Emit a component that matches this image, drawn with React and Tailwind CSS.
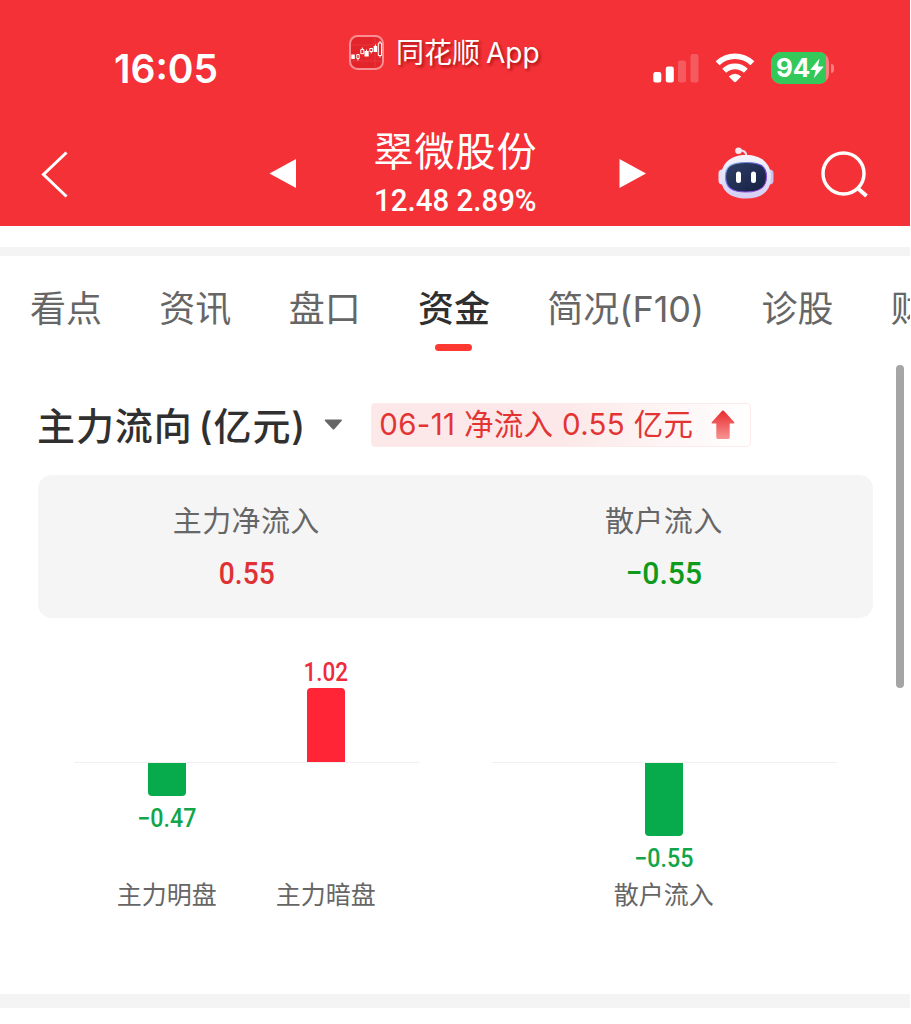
import React, { useState } from 'react';

const TABS = ['看点', '资讯', '盘口', '资金', '简况(F10)', '诊股', '财务'];

const SUMMARY = [
  { label: '主力净流入', value: '0.55', color: 'text-[#e03234]', scale: 'scale-x-[0.88]' },
  { label: '散户流入', value: '−0.55', color: 'text-[#109a1c]', scale: 'scale-x-[0.94]' },
];

const CHARTS = [
  [
    { label: '主力明盘', value: '−0.47', height: 33, up: false },
    { label: '主力暗盘', value: '1.02', height: 74, up: true },
  ],
  [{ label: '散户流入', value: '−0.55', height: 73, up: false }],
];

function AppLogo() {
  return (
    <svg width="35" height="35" viewBox="0 0 35 35" fill="none">
      <rect x="1" y="1" width="33" height="33" rx="7.5" fill="#e3242b" stroke="#f98f92" strokeWidth="2" />
      <path d="M2 10H33M2 26H33M26 2V33" stroke="#ee4448" strokeWidth="0.6" />
      <path d="M2.300 19.500h3.500v4.500h-3.500zM15.500 16h4.200v5.500H15.500zM24.700 11h3.500v6h-3.500z" fill="#fff" />
      <path d="M7.800 19.500h2.400v4H7.800zM11.800 14.500h3v4.200h-3zM20.800 13.500h2.900v3h-2.900zM29.300 8h3.200v12.500h-3.200z" stroke="#fff" strokeWidth="1" />
      <path d="M9 23.500v2M13.300 14.500v-2M17.600 16v-1.500M22.200 16.500v2M26.500 11v-1.500M31 8V6M31 20.500v2" stroke="#fff" strokeWidth="1" />
    </svg>
  );
}

function SignalIcon() {
  return (
    <svg width="46" height="30" viewBox="0 0 46 30" fill="#fff">
      <rect x="0.300" y="19" width="8" height="10.500" rx="2.200" />
      <rect x="12.800" y="13.500" width="8" height="16" rx="2.200" />
      <rect x="25" y="7.500" width="8" height="22" rx="2.200" opacity="0.2" />
      <rect x="37.500" y="1" width="8" height="28.500" rx="2.200" opacity="0.2" />
    </svg>
  );
}

function WifiIcon() {
  return (
    <svg width="40" height="30" viewBox="0 0 40 30" fill="none" stroke="#fff" strokeWidth="5.600">
      <path d="M2.600 10.300A25 25 0 0 1 37.400 10.300" />
      <path d="M9.200 17.800A15.500 15.500 0 0 1 30.800 17.800" />
      <path d="M13.800 23.600Q20 17.800 26.200 23.600L21 28.800Q20 29.700 19 28.800Z" fill="#fff" stroke="none" />
    </svg>
  );
}

function Battery() {
  return (
    <div className="flex items-center">
      <div className="flex h-8 w-[58px] overflow-hidden rounded-[10px] bg-[#f77f80]">
        <div className="flex h-8 w-[55px] items-center bg-[#33c85a] pl-[5px]">
          <span className="text-[26px] leading-8 font-bold tracking-[-0.2px] text-white">94</span>
          <svg className="shrink-0" width="14" height="21" viewBox="0 0 14 21" fill="#fff">
            <path d="M9.500 0.500L0.600 11.400Q0.200 12 0.900 12H5.800L3.800 20.200L13.200 9.300Q13.600 8.600 12.900 8.600H7.900Z" />
          </svg>
        </div>
      </div>
      <div className="ml-[2px] h-[9px] w-[3px] rounded-r-full bg-[#f77f80]" />
    </div>
  );
}

function RobotIcon() {
  return (
    <svg width="56" height="52" viewBox="0 0 56 52" fill="none">
      <defs>
        <linearGradient id="shell" x1="0" y1="0" x2="0" y2="1">
          <stop offset="0" stopColor="#f7f6fd" />
          <stop offset="1" stopColor="#d3cdf3" />
        </linearGradient>
        <linearGradient id="rim" x1="0" y1="0" x2="1" y2="1">
          <stop offset="0" stopColor="#7fc3e8" />
          <stop offset="0.500" stopColor="#6b4fe0" />
          <stop offset="1" stopColor="#a44bd8" />
        </linearGradient>
        <linearGradient id="screen" x1="0" y1="0" x2="1" y2="1">
          <stop offset="0" stopColor="#303e66" />
          <stop offset="1" stopColor="#151f43" />
        </linearGradient>
      </defs>
      <path d="M20.500 3.500C26 3 28.500 5 28.500 10" stroke="#f0dcea" strokeWidth="2.200" />
      <circle cx="20.500" cy="3.700" r="3.300" fill="#f6e7f1" />
      <rect x="0.500" y="22.500" width="9" height="15" rx="4" fill="#e4e0f8" />
      <rect x="46.500" y="22.500" width="9" height="15" rx="4" fill="#c9c3ee" />
      <path d="M28 8C43 8 53 16 53 30C53 44 44 51.500 28 51.500S3 44 3 30C3 16 13 8 28 8Z" fill="url(#shell)" />
      <path d="M28 15.500C42 15.500 48.500 19 48.500 29.500C48.500 40.500 42 45 28 45S7.500 40.500 7.500 29.500C7.500 19 14 15.500 28 15.500Z" fill="url(#screen)" stroke="url(#rim)" strokeWidth="1.200" />
      <rect x="18" y="24.500" width="5" height="11.500" rx="2.500" fill="#fff" />
      <rect x="33" y="24.500" width="5" height="11.500" rx="2.500" fill="#fff" />
    </svg>
  );
}

function Header() {
  return (
    <header className="h-[226px] bg-[#f33136] text-white">
      <div className="flex h-[106px] items-start">
        <div className="mt-[44px] ml-[114px] w-[235px] text-[39px] leading-[50px] font-semibold">16:05</div>
        <div className="mt-[34px] flex h-9 w-[304px] items-center gap-3">
          <AppLogo />
          <span className="pt-[2px] text-[28px] leading-9 whitespace-nowrap [text-shadow:2px_2px_3px_rgba(120,0,0,0.6)]">
            同花顺<span className="ml-[6px]">App</span>
          </span>
        </div>
        <div className="mt-[52px] flex h-8 items-center">
          <SignalIcon />
          <div className="ml-[16px]"><WifiIcon /></div>
          <div className="ml-[16px]"><Battery /></div>
        </div>
      </div>
      <div className="flex h-[120px] items-start">
        <button type="button" className="mt-[45px] ml-[41px]">
          <svg width="28" height="48" viewBox="0 0 28 48" fill="none" stroke="#fff" strokeWidth="3">
            <path d="M25.500 1.500L2.500 23.500L25.500 45.500" />
          </svg>
        </button>
        <button type="button" className="mt-[52px] ml-[200px]">
          <svg width="28" height="32" viewBox="0 0 28 32" fill="#fff"><path d="M0.500 15.500L27 1V30Z" /></svg>
        </button>
        <div className="ml-[58px] flex w-[201px] flex-col items-center">
          <h1 className="mt-[20px] text-[40px] leading-[52px] tracking-[1px] whitespace-nowrap">翠微股份</h1>
          <div className="mt-[2px] scale-x-[0.92] font-['Roboto'] text-[32px] leading-10 font-medium whitespace-nowrap">12.48 2.89%</div>
        </div>
        <button type="button" className="mt-[52px] ml-[63px]">
          <svg width="28" height="32" viewBox="0 0 28 32" fill="#fff"><path d="M27 15.500L0.500 1V30Z" /></svg>
        </button>
        <button type="button" className="mt-[41px] ml-[71px]"><RobotIcon /></button>
        <button type="button" className="mt-[44px] ml-[46px]">
          <svg width="50" height="50" viewBox="0 0 50 50" fill="none" stroke="#fff" strokeWidth="3.500">
            <circle cx="23.500" cy="23.500" r="20.500" />
            <path d="M37.500 38L46.500 46" strokeWidth="4" />
          </svg>
        </button>
      </div>
    </header>
  );
}

function Tabs() {
  const [active, setActive] = useState('资金');
  return (
    <nav className="flex h-[109px] gap-[57.3px] overflow-hidden pt-[28px] pl-[30px]">
      {TABS.map((tab) => (
        <button
          key={tab}
          type="button"
          onClick={() => setActive(tab)}
          className="flex shrink-0 flex-col items-center text-[36px] leading-[50px] whitespace-nowrap text-[#666]"
        >
          <span className={tab === active ? 'font-medium text-[#2f2f2f]' : ''}>{tab}</span>
          {tab === active && <span className="mt-[10px] h-[7px] w-[37px] rounded-full bg-[#ff3832]" />}
        </button>
      ))}
    </nav>
  );
}

function FlowTitle() {
  return (
    <div className="flex h-[110px] items-center pt-[9px] pl-[37px]">
      <h2 className="pt-[2px] text-[38px] leading-[50px] font-medium tracking-[0.9px] whitespace-nowrap text-[#303030]">
        主力流向<span className="ml-[6px]">(亿元)</span>
      </h2>
      <svg className="ml-[18px]" width="19" height="12" viewBox="0 0 19 12" fill="#666">
        <path d="M1.500 0.500H17Q19 0.500 17.500 2L10.500 10Q9.500 11 8.500 10L1 2Q0 0.500 1.500 0.500Z" />
      </svg>
      <div className="ml-[28px] flex h-[44px] w-[380px] items-center rounded-[4px] border border-[#fdeaea] bg-linear-to-r from-[#fce8e8] from-50% to-white pl-[7px] text-[29.5px] text-[#e33434]">
        <span className="w-[315px] tracking-[0.32px] whitespace-pre">06-11 净流入 0.55 亿元</span>
        <svg className="ml-[17px]" width="24" height="30" viewBox="0 0 24 30">
          <defs>
            <linearGradient id="arrow" x1="0" y1="0" x2="0" y2="1">
              <stop offset="0" stopColor="#ea2b2d" />
              <stop offset="1" stopColor="#f69494" />
            </linearGradient>
          </defs>
          <path d="M12 0.500Q12.800 0.500 13.300 1.200L23.300 12.300Q23.800 13.500 22.500 13.500H18.700V27.500Q18.700 29 17 29H7Q5.300 29 5.300 27.500V13.500H1.500Q0.200 13.500 0.700 12.300L10.700 1.200Q11.200 0.500 12 0.500Z" fill="url(#arrow)" />
        </svg>
      </div>
    </div>
  );
}

function Bar({ label, value, height, up }) {
  return (
    <div className="flex w-[159px] flex-col items-center">
      <div className="flex h-[124px] flex-col items-center justify-end">
        {up && (
          <>
            <span className="mb-[-1px] scale-x-90 font-['Roboto'] text-[25px] leading-8 font-medium text-[#ee2b3c]">{value}</span>
            <div className="w-[38px] rounded-t-[4px] bg-[#ff2436]" style={{ height }} />
          </>
        )}
      </div>
      <div className="flex h-[115px] flex-col items-center">
        {!up && (
          <>
            <div className="mt-px w-[38px] rounded-b-[4px] bg-[#07ab4b]" style={{ height }} />
            <span className="mt-[7px] scale-x-[0.93] font-['Roboto'] text-[25px] leading-8 font-medium text-[#12a54b]">{value}</span>
          </>
        )}
      </div>
      <span className="text-[25px] leading-9 whitespace-nowrap text-[#666]">{label}</span>
    </div>
  );
}

function App() {
  return (
    <div className="relative h-[1024px] w-[911px] overflow-hidden bg-white font-['Inter','Noto_Sans_CJK_SC',sans-serif]">
      <div className="w-[910px]">
        <Header />
        <div className="mt-[21px] h-[9px] bg-[#f4f4f4]" />
        <Tabs />
        <FlowTitle />

        <section className="ml-[37.500px] flex h-[143px] w-[835px] rounded-[14px] bg-[#f5f5f5]">
          {SUMMARY.map((item) => (
            <div key={item.label} className="flex flex-1 flex-col items-center">
              <span className="mt-[26px] text-[29px] leading-[42px] tracking-[0.4px] text-[#666]">{item.label}</span>
              <span className={`mt-[10px] font-['Roboto'] text-[32px] leading-10 font-medium ${item.scale} ${item.color}`}>{item.value}</span>
            </div>
          ))}
        </section>

        <section className="mt-[20px] ml-[37.500px] flex h-[356px] w-[835px]">
          {CHARTS.map((bars, index) => (
            <div key={index} className="relative flex flex-1 justify-center">
              <div className="absolute top-[123.500px] left-[36.500px] h-[1.500px] w-[345px] bg-[#f0f0f0]" />
              {bars.map((bar) => <Bar key={bar.label} {...bar} />)}
            </div>
          ))}
        </section>

        <div className="h-[14px] bg-[#f4f4f4]" />
      </div>
      <div className="absolute top-[365px] left-[896px] h-[323px] w-[8px] rounded-full bg-[#a5a5a5]" />
    </div>
  );
}

export default App;
